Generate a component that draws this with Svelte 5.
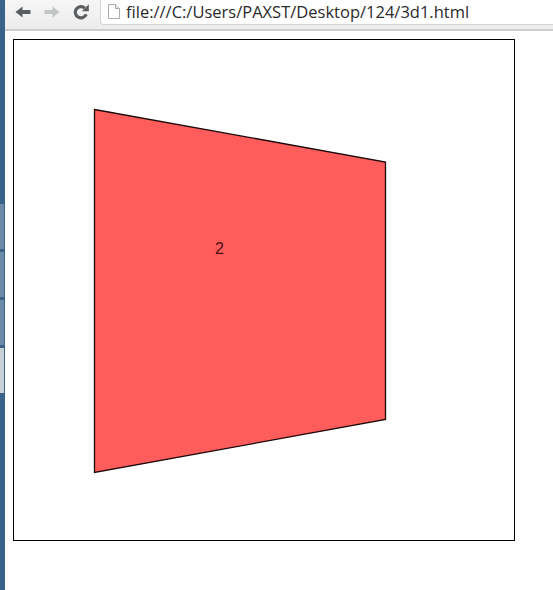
<script>
  const tabs = [false, false, false, true]
</script>

<div class="window">
  <aside class="rail">
    {#each tabs as active}
      <span class="rail-tab" class:active></span>
    {/each}
  </aside>

  <div class="browser">
    <header class="toolbar">
      <svg class="nav-icon" viewBox="0 0 16 16" width="16" height="16">
        <path d="M15.500 6H7.500V2.500L.5 8l7 5.500V10h8z" fill="#5c5f61" />
      </svg>
      <svg class="nav-icon" viewBox="0 0 16 16" width="16" height="16">
        <path d="M.5 6h8V2.500l7 5.500-7 5.500V10h-8z" fill="#c3c6c7" />
      </svg>
      <svg class="nav-icon reload" viewBox="0 0 16 16" width="16" height="16">
        <path d="M13.200 10.200A5.600 5.600 0 1 1 11.800 4.200" fill="none" stroke="#5c5f61" stroke-width="3.200" />
        <path d="M8.800 7.200h7V.2z" fill="#5c5f61" />
      </svg>
      <div class="address">
        <svg class="file-icon" viewBox="0 0 12 15" width="12" height="15">
          <path d="M.5.500h7l4 4v10H.5z" fill="#fff" stroke="#a9acae" />
          <path d="M7.500.500v4h4" fill="#e8e9ea" stroke="#a9acae" />
        </svg>
        <span class="url">file:///C:/Users/PAXST/Desktop/124/3d1.html</span>
      </div>
    </header>

    <main class="page">
      <svg class="scene" viewBox="0 0 500 500" width="500" height="500">
        <polygon points="80.500,69.500 371.500,122 371.500,379.500 80.500,432.500" />
        <text x="205.500" y="214">2</text>
      </svg>
    </main>
  </div>
</div>

<style>
  :global(body) {
    background: #fff;
  }

  .window {
    display: flex;
    width: 553px;
    height: 590px;
    overflow: hidden;
  }

  .rail {
    display: flex;
    flex-direction: column;
    flex: none;
    gap: 3px;
    width: 5px;
    padding-top: 204px;
    box-sizing: border-box;
    background: #3b6389;
  }

  .rail-tab {
    width: 4px;
    height: 45px;
    background: #6b8ba6;
  }

  .rail-tab.active {
    background: #c9d0d6;
  }

  .browser {
    flex: 1;
    min-width: 0;
  }

  .toolbar {
    display: flex;
    align-items: center;
    height: 31px;
    box-sizing: border-box;
    padding: 0 0 5px 10px;
    background: linear-gradient(#f6f6f6, #ececec);
    border-bottom: 2px solid #cdcdcd;
  }

  .nav-icon {
    flex: none;
    margin-right: 13px;
  }

  .reload {
    margin-right: 11px;
  }

  .address {
    display: flex;
    align-items: center;
    flex: 1;
    height: 25px;
    padding-left: 7px;
    background: #fff;
    border-left: 1px solid #d4d4d4;
    border-bottom: 1px solid #d4d4d4;
    border-bottom-left-radius: 3px;
  }

  .file-icon {
    flex: none;
    margin-right: 6px;
  }

  .url {
    font: 16.500px "Open Sans", sans-serif;
    color: #2b2b2b;
    white-space: nowrap;
  }

  .page {
    padding: 8px 0 0 8px;
  }

  .scene {
    display: block;
    box-sizing: content-box;
    border: 1px solid #000;
  }

  polygon {
    fill: #ff5c5c;
    stroke: #1c0808;
    stroke-width: 1.300;
  }

  text {
    font: 16px "Liberation Sans", sans-serif;
    fill: #4a1212;
    text-anchor: middle;
  }
</style>
